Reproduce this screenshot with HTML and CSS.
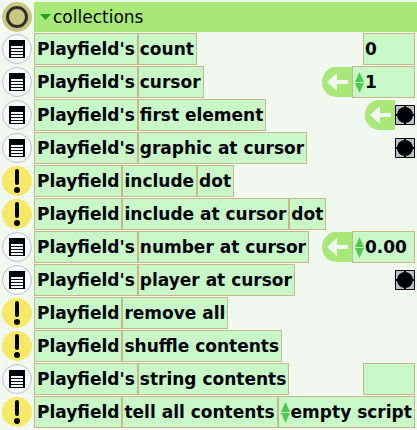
FILE: index.html
```html
<!DOCTYPE html>
<html lang="en">
<head>
  <meta charset="UTF-8">
  <meta name="viewport" content="width=device-width, initial-scale=1.0">
  <title>Playfield</title>
  <link rel="stylesheet" href="styles.css">
</head>
<body>

  <!-- Shapes shared by the rows -->
  <svg class="defs" width="0" height="0" aria-hidden="true">
    <symbol id="menu" viewBox="0 0 30 30">
      <circle cx="15" cy="15" r="14.5" fill="#f8f8ff" stroke="#c0c0c4"/>
      <path d="M7 6h16v18H7z" fill="#000008"/>
      <path d="M9 12h12v2H9zM9 15h12v2H9zM9 18h12v2H9zM9 21h12v2H9z" fill="#f8f8ff"/>
    </symbol>
    <symbol id="run" viewBox="0 0 30 30">
      <circle cx="15" cy="15" r="15" fill="#f8e868"/>
      <path d="M15 5v12" stroke="#000008" stroke-width="4" stroke-linecap="round"/>
      <circle cx="15" cy="24" r="3" fill="#000008"/>
    </symbol>
    <symbol id="assign" viewBox="0 0 30 30">
      <path d="M30 0H14A14 15 0 0 0 14 30H30z" fill="#a8e878"/>
      <path d="M5 15L15 6V13H26V17H15V24z" fill="#f0f8f0"/>
    </symbol>
    <symbol id="dot" viewBox="0 0 20 20">
      <path d="M.5 .5h19v19H.5z" fill="#c0c0c4" stroke="#000008"/>
      <circle cx="10" cy="10" r="8" fill="#000008"/>
      <path d="M10 1v18M1 10h18" stroke="#000008" stroke-width="2"/>
    </symbol>
    <symbol id="up" viewBox="0 0 9 10">
      <path d="M4.5 0L9 10H0z" fill="#50c850"/>
    </symbol>
    <symbol id="down" viewBox="0 0 9 10">
      <path d="M0 0H9L4.5 10z" fill="#50c850"/>
    </symbol>
  </svg>

  <main class="viewer">
    <div class="row header">
      <button class="round" aria-label="Category menu">
        <svg viewBox="0 0 30 30">
          <circle cx="15" cy="15" r="15" fill="#c8c880"/>
          <circle cx="15" cy="15" r="9.5" fill="none" stroke="#303030" stroke-width="3"/>
        </svg>
      </button>
      <button class="category">
        <svg class="triangle" viewBox="0 0 11 6"><path d="M0 0H11L5.5 6z" fill="#20a020"/></svg>
        collections
      </button>
    </div>

    <div class="row">
      <button class="round" aria-label="Menu"><svg><use href="#menu"/></svg></button>
      <span class="tile owner">Playfield's</span>
      <label class="tile" for="count">count</label>
      <div class="value">
        <input class="tile number" id="count" type="text" value="0" readonly>
      </div>
    </div>

    <div class="row">
      <button class="round" aria-label="Menu"><svg><use href="#menu"/></svg></button>
      <span class="tile owner">Playfield's</span>
      <label class="tile" for="cursor">cursor</label>
      <div class="value">
        <button class="assign" aria-label="Assign"><svg><use href="#assign"/></svg></button>
        <div class="tile">
          <span class="stepper">
            <button aria-label="Up"><svg><use href="#up"/></svg></button>
            <button aria-label="Down"><svg><use href="#down"/></svg></button>
          </span>
          <input class="number" id="cursor" type="text" value="1">
        </div>
      </div>
    </div>

    <div class="row">
      <button class="round" aria-label="Menu"><svg><use href="#menu"/></svg></button>
      <span class="tile owner">Playfield's</span>
      <span class="tile">first element</span>
      <div class="value">
        <button class="assign" aria-label="Assign"><svg><use href="#assign"/></svg></button>
        <button class="dot" aria-label="First element"><svg><use href="#dot"/></svg></button>
      </div>
    </div>

    <div class="row">
      <button class="round" aria-label="Menu"><svg><use href="#menu"/></svg></button>
      <span class="tile owner">Playfield's</span>
      <span class="tile">graphic at cursor</span>
      <div class="value">
        <button class="dot" aria-label="Graphic at cursor"><svg><use href="#dot"/></svg></button>
      </div>
    </div>

    <div class="row">
      <button class="round" aria-label="Run"><svg><use href="#run"/></svg></button>
      <span class="tile owner">Playfield</span>
      <span class="tile">include</span>
      <span class="tile">dot</span>
    </div>

    <div class="row">
      <button class="round" aria-label="Run"><svg><use href="#run"/></svg></button>
      <span class="tile owner">Playfield</span>
      <span class="tile">include at cursor</span>
      <span class="tile">dot</span>
    </div>

    <div class="row">
      <button class="round" aria-label="Menu"><svg><use href="#menu"/></svg></button>
      <span class="tile owner">Playfield's</span>
      <label class="tile" for="number-at-cursor">number at cursor</label>
      <div class="value">
        <button class="assign" aria-label="Assign"><svg><use href="#assign"/></svg></button>
        <div class="tile">
          <span class="stepper">
            <button aria-label="Up"><svg><use href="#up"/></svg></button>
            <button aria-label="Down"><svg><use href="#down"/></svg></button>
          </span>
          <input class="number" id="number-at-cursor" type="text" value="0.00">
        </div>
      </div>
    </div>

    <div class="row">
      <button class="round" aria-label="Menu"><svg><use href="#menu"/></svg></button>
      <span class="tile owner">Playfield's</span>
      <span class="tile">player at cursor</span>
      <div class="value">
        <button class="dot" aria-label="Player at cursor"><svg><use href="#dot"/></svg></button>
      </div>
    </div>

    <div class="row">
      <button class="round" aria-label="Run"><svg><use href="#run"/></svg></button>
      <span class="tile owner">Playfield</span>
      <span class="tile">remove all</span>
    </div>

    <div class="row">
      <button class="round" aria-label="Run"><svg><use href="#run"/></svg></button>
      <span class="tile owner">Playfield</span>
      <span class="tile">shuffle contents</span>
    </div>

    <div class="row">
      <button class="round" aria-label="Menu"><svg><use href="#menu"/></svg></button>
      <span class="tile owner">Playfield's</span>
      <label class="tile" for="string-contents">string contents</label>
      <div class="value">
        <input class="tile number" id="string-contents" type="text" readonly>
      </div>
    </div>

    <div class="row">
      <button class="round" aria-label="Run"><svg><use href="#run"/></svg></button>
      <span class="tile owner">Playfield</span>
      <span class="tile">tell all contents</span>
      <div class="tile">
        <span class="stepper">
          <button aria-label="Previous script"><svg><use href="#up"/></svg></button>
          <button aria-label="Next script"><svg><use href="#down"/></svg></button>
        </span>
        empty script
      </div>
    </div>
  </main>

</body>
</html>
```
FILE: styles.css
```css
* {
  box-sizing: border-box;
}
body {
  margin: 0;
  background-color: #f0f8f0;
  color: #000008;
  font-family: "DejaVu Sans", sans-serif;
  font-size: 17px;
}
button {
  display: block;
  flex: none;
  padding: 0;
  border: none;
  background: none;
  color: inherit;
  font: inherit;
  cursor: pointer;
}
svg {
  display: block;
  width: 100%;
  height: 100%;
}
.defs {
  position: absolute;
  width: 0;
  height: 0;
}
.viewer {
  display: flex;
  flex-direction: column;
  gap: 1px;
  padding: 2px 0 2px 2px;
}
.row {
  display: flex;
  align-items: center;
  height: 32px;
  padding-right: 2px;
}
.header {
  height: 30px;
  padding-right: 0;
}
.round {
  width: 30px;
  height: 30px;
  margin-right: 2px;
}
.category {
  display: flex;
  flex: 1;
  align-items: center;
  gap: 2px;
  height: 30px;
  padding-left: 6px;
  background-color: #a8e878;
}
.triangle {
  width: 11px;
  height: 6px;
}
.tile {
  display: flex;
  align-items: center;
  height: 32px;
  padding: 0 2px 0 1px;
  border: 1px solid #c8b888;
  background-color: #c8f8c8;
  font-weight: bold;
  white-space: nowrap;
}
.owner {
  padding-left: 2px;
}
.value {
  display: flex;
  align-items: center;
  margin-left: auto;
}
/* Number and text read-outs */
.number {
  color: inherit;
  font: inherit;
  font-weight: bold;
}
.number.tile {
  width: 52px;
}
.tile .number {
  width: 47px;
  padding: 0;
  border: none;
  background: none;
}
.stepper {
  display: flex;
  flex-direction: column;
  gap: 1px;
  margin: 0 1px;
}
.stepper button {
  width: 9px;
  height: 10px;
}
.assign {
  width: 30px;
  height: 30px;
}
.dot {
  width: 20px;
  height: 20px;
}
```
